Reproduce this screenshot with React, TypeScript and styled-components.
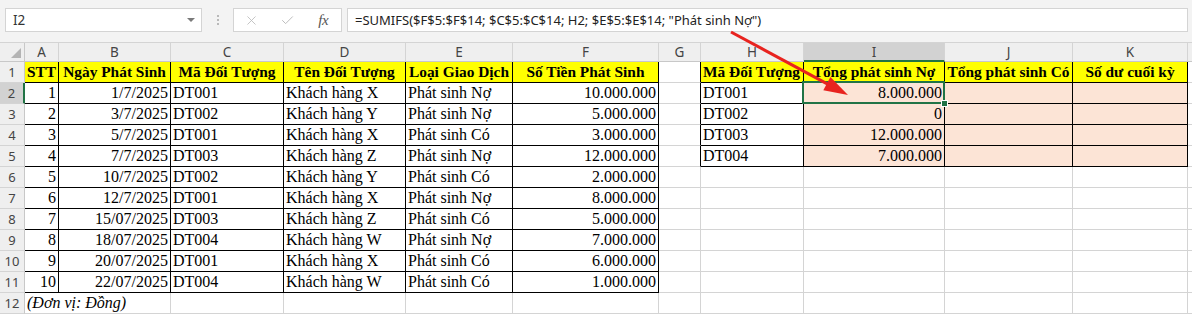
import React from "react";
import styled, { createGlobalStyle } from "styled-components";
import { X, Check } from "lucide-react";

const GlobalStyle = createGlobalStyle`
  html, body { margin: 0; padding: 0; background: #fff; overflow: hidden; }
  #root { width: 1192px; height: 317px; }
`;

const Screen = styled.div`
  position: relative;
  width: 1192px;
  height: 317px;
  overflow: hidden;
  background: #fff;
  font-family: "Noto Sans", "Liberation Sans", sans-serif;
`;

const TopBar = styled.div`
  height: 43px;
  box-sizing: border-box;
  background: #f3f3f3;
  border-bottom: 1px solid #d4d4d4;
  display: flex;
  align-items: flex-start;
  padding: 8px 4px 0 5px;
`;

const NameBox = styled.div`
  width: 197px;
  height: 24px;
  box-sizing: border-box;
  background: #fff;
  border: 1px solid #d4d4d4;
  display: flex;
  align-items: center;
  justify-content: space-between;
  padding: 0 6px 0 7px;
  font-size: 13.5px;
  color: #333;
`;

const Caret = styled.span`
  width: 0;
  height: 0;
  border-left: 4px solid transparent;
  border-right: 4px solid transparent;
  border-top: 4px solid #7a7a7a;
`;

const Grip = styled.div`
  width: 31px;
  height: 24px;
  display: flex;
  flex-direction: column;
  align-items: center;
  justify-content: center;
  gap: 2px;
`;

const GripDot = styled.span`
  width: 2px;
  height: 2px;
  background: #b9b9b9;
`;

const FnButtons = styled.div`
  width: 109px;
  height: 24px;
  box-sizing: border-box;
  background: #fff;
  border: 1px solid #d4d4d4;
  display: flex;
  align-items: center;
`;

const FnSlot = styled.div`
  width: 36px;
  height: 22px;
  display: flex;
  align-items: center;
  justify-content: center;
  color: #bdbdbd;
`;

const FxLabel = styled.span`
  font-family: "Liberation Serif", "Times New Roman", serif;
  font-style: italic;
  font-size: 15px;
  color: #555;
  letter-spacing: -0.5px;
`;

const FormulaInput = styled.div`
  flex: 1;
  margin-left: 5px;
  height: 24px;
  box-sizing: border-box;
  background: #fff;
  border: 1px solid #d4d4d4;
  font-size: 13px;
  line-height: 22px;
  padding-left: 7px;
  color: #222;
  white-space: nowrap;
  overflow: hidden;
`;

const Sheet = styled.div`
  display: grid;
  grid-template-columns: 25px 34px 112px 113px 122px 107px 146px 42px 103px 141px 128px 115px 1fr;
  grid-template-rows: 19px repeat(12, 21px);
`;

const Corner = styled.div`
  position: relative;
  background: #efefef;
  border-right: 1px solid #c8c8c8;
  border-bottom: 1px solid #c8c8c8;
  box-sizing: border-box;
  &::after {
    content: "";
    position: absolute;
    right: 3px;
    bottom: 3px;
    width: 0;
    height: 0;
    border-left: 10px solid transparent;
    border-bottom: 10px solid #b4b4b4;
  }
`;

const ColHead = styled.div<{ $sel?: boolean }>`
  box-sizing: border-box;
  background: ${(p) => (p.$sel ? "#d2d2d2" : "#efefef")};
  border-right: 1px solid #d4d4d4;
  border-bottom: ${(p) => (p.$sel ? "2px solid #217346" : "1px solid #c8c8c8")};
  font-size: 13.5px;
  color: #444;
  text-align: center;
  line-height: 18px;
`;

const RowHead = styled.div<{ $sel?: boolean }>`
  box-sizing: border-box;
  background: ${(p) => (p.$sel ? "#d2d2d2" : "#efefef")};
  border-right: ${(p) => (p.$sel ? "2px solid #217346" : "1px solid #c8c8c8")};
  border-bottom: 1px solid #d4d4d4;
  font-size: 13px;
  color: #444;
  text-align: center;
  line-height: 20px;
`;

const Cell = styled.div<{
  $fill?: string;
  $align?: "left" | "right" | "center";
  $bold?: boolean;
  $italic?: boolean;
  $br?: boolean;
  $bb?: boolean;
  $span?: number;
}>`
  box-sizing: border-box;
  grid-column: ${(p) => (p.$span ? `span ${p.$span}` : "auto")};
  background: ${(p) => p.$fill || "#fff"};
  border-right: 1px solid ${(p) => (p.$br ? "#000" : "#d4d4d4")};
  border-bottom: 1px solid ${(p) => (p.$bb ? "#000" : "#d4d4d4")};
  font-family: "Liberation Serif", "Times New Roman", serif;
  font-size: ${(p) => (p.$bold ? "15.4px" : "16px")};
  font-weight: ${(p) => (p.$bold ? 700 : 400)};
  font-style: ${(p) => (p.$italic ? "italic" : "normal")};
  color: #000;
  text-align: ${(p) => p.$align || "left"};
  line-height: 20px;
  padding: 0 2px 0 2px;
  white-space: nowrap;
  overflow: hidden;
`;

const ActiveCell = styled(Cell)`
  position: relative;
  overflow: visible;
  z-index: 2;
  &::before {
    content: "";
    position: absolute;
    left: -2px;
    top: -2px;
    right: -1px;
    bottom: -1px;
    border: 2px solid #217346;
    pointer-events: none;
  }
`;

const FillHandle = styled.span`
  position: absolute;
  right: -4px;
  bottom: -4px;
  width: 5px;
  height: 5px;
  background: #217346;
  border: 1px solid #fff;
`;

const ArrowLayer = styled.svg`
  position: absolute;
  left: 0;
  top: 0;
  pointer-events: none;
  z-index: 5;
`;

type C = { t: string; a?: "left" | "right" | "center"; b?: boolean };

const headers = [
  "STT",
  "Ngày Phát Sinh",
  "Mã Đối Tượng",
  "Tên Đối Tượng",
  "Loại Giao Dịch",
  "Số Tiền Phát Sinh",
  "",
  "Mã Đối Tượng",
  "Tổng phát sinh Nợ",
  "Tổng phát sinh Có",
  "Số dư cuối kỳ",
  "",
];

const leftData: [string, string, string, string, string, string][] = [
  ["1", "1/7/2025", "DT001", "Khách hàng X", "Phát sinh Nợ", "10.000.000"],
  ["2", "3/7/2025", "DT002", "Khách hàng Y", "Phát sinh Nợ", "5.000.000"],
  ["3", "5/7/2025", "DT001", "Khách hàng X", "Phát sinh Có", "3.000.000"],
  ["4", "7/7/2025", "DT003", "Khách hàng Z", "Phát sinh Nợ", "12.000.000"],
  ["5", "10/7/2025", "DT002", "Khách hàng Y", "Phát sinh Có", "2.000.000"],
  ["6", "12/7/2025", "DT001", "Khách hàng X", "Phát sinh Nợ", "8.000.000"],
  ["7", "15/07/2025", "DT003", "Khách hàng Z", "Phát sinh Có", "5.000.000"],
  ["8", "18/07/2025", "DT004", "Khách hàng W", "Phát sinh Nợ", "7.000.000"],
  ["9", "20/07/2025", "DT001", "Khách hàng X", "Phát sinh Có", "6.000.000"],
  ["10", "22/07/2025", "DT004", "Khách hàng W", "Phát sinh Có", "1.000.000"],
];

const rightData: [string, string][] = [
  ["DT001", "8.000.000"],
  ["DT002", "0"],
  ["DT003", "12.000.000"],
  ["DT004", "7.000.000"],
];

const colLetters = ["A", "B", "C", "D", "E", "F", "G", "H", "I", "J", "K", ""];

const boxed = (r: number, c: number) =>
  (r >= 1 && r <= 11 && c >= 0 && c <= 5) || (r >= 1 && r <= 5 && c >= 7 && c <= 10);

const cellContent = (r: number, c: number): C => {
  if (r === 1) {
    return { t: headers[c], a: c === 7 ? "left" : "center", b: true };
  }
  if (r >= 2 && r <= 11) {
    const row = leftData[r - 2];
    if (c <= 5) {
      const align: "left" | "right" = c === 0 || c === 1 || c === 5 ? "right" : "left";
      return { t: row[c], a: align };
    }
  }
  if (r >= 2 && r <= 5) {
    const row = rightData[r - 2];
    if (c === 7) return { t: row[0] };
    if (c === 8) return { t: row[1], a: "right" };
  }
  return { t: "" };
};

const fillFor = (r: number, c: number) => {
  if (r === 1 && c !== 6 && c <= 10) return "#ffff00";
  if (r >= 2 && r <= 5 && c >= 8 && c <= 10) return "#fce4d6";
  return undefined;
};

export default function App() {
  const rows: React.ReactNode[] = [];
  for (let r = 1; r <= 12; r++) {
    rows.push(
      <RowHead key={`rh${r}`} $sel={r === 2}>
        {r}
      </RowHead>
    );
    for (let c = 0; c < 12; c++) {
      if (r === 12 && c === 1) continue;
      const br = boxed(r, c) || boxed(r, c + 1);
      const bb = boxed(r, c) || boxed(r + 1, c);
      if (r === 12 && c === 0) {
        rows.push(
          <Cell key={`c${r}-${c}`} $span={2} $italic>
            (Đơn vị: Đồng)
          </Cell>
        );
        continue;
      }
      const ct = cellContent(r, c);
      if (r === 2 && c === 8) {
        rows.push(
          <ActiveCell key={`c${r}-${c}`} $fill={fillFor(r, c)} $align="right" $br={br} $bb={bb}>
            {ct.t}
            <FillHandle />
          </ActiveCell>
        );
        continue;
      }
      rows.push(
        <Cell
          key={`c${r}-${c}`}
          $fill={fillFor(r, c)}
          $align={ct.a}
          $bold={ct.b}
          $br={br}
          $bb={bb}
        >
          {ct.t}
        </Cell>
      );
    }
  }

  // arrow geometry
  const x1 = 731, y1 = 32, tx = 848, ty = 95;
  const dx = tx - x1, dy = ty - y1;
  const len = Math.hypot(dx, dy);
  const ux = dx / len, uy = dy / len;
  const hl = 24, hw = 7.5;
  const bx = tx - ux * hl, by = ty - uy * hl;
  const p1 = `${bx - uy * hw},${by + ux * hw}`;
  const p2 = `${bx + uy * hw},${by - ux * hw}`;

  return (
    <Screen>
      <GlobalStyle />
      <TopBar>
        <NameBox>
          <span>I2</span>
          <Caret />
        </NameBox>
        <Grip>
          <GripDot />
          <GripDot />
          <GripDot />
        </Grip>
        <FnButtons>
          <FnSlot>
            <X size={15} strokeWidth={1.4} />
          </FnSlot>
          <FnSlot>
            <Check size={15} strokeWidth={1.6} />
          </FnSlot>
          <FnSlot>
            <FxLabel>fx</FxLabel>
          </FnSlot>
        </FnButtons>
        <FormulaInput>=SUMIFS($F$5:$F$14; $C$5:$C$14; H2; $E$5:$E$14; "Phát sinh Nợ")</FormulaInput>
      </TopBar>
      <Sheet>
        <Corner />
        {colLetters.map((l, i) => (
          <ColHead key={`h${i}`} $sel={l === "I"}>
            {l}
          </ColHead>
        ))}
        {rows}
      </Sheet>
      <ArrowLayer width={1192} height={317} viewBox="0 0 1192 317">
        <line x1={x1} y1={y1} x2={bx + ux * 2} y2={by + uy * 2} stroke="#e8231f" strokeWidth={3} />
        <polygon points={`${tx},${ty} ${p1} ${p2}`} fill="#e8231f" />
      </ArrowLayer>
    </Screen>
  );
}
